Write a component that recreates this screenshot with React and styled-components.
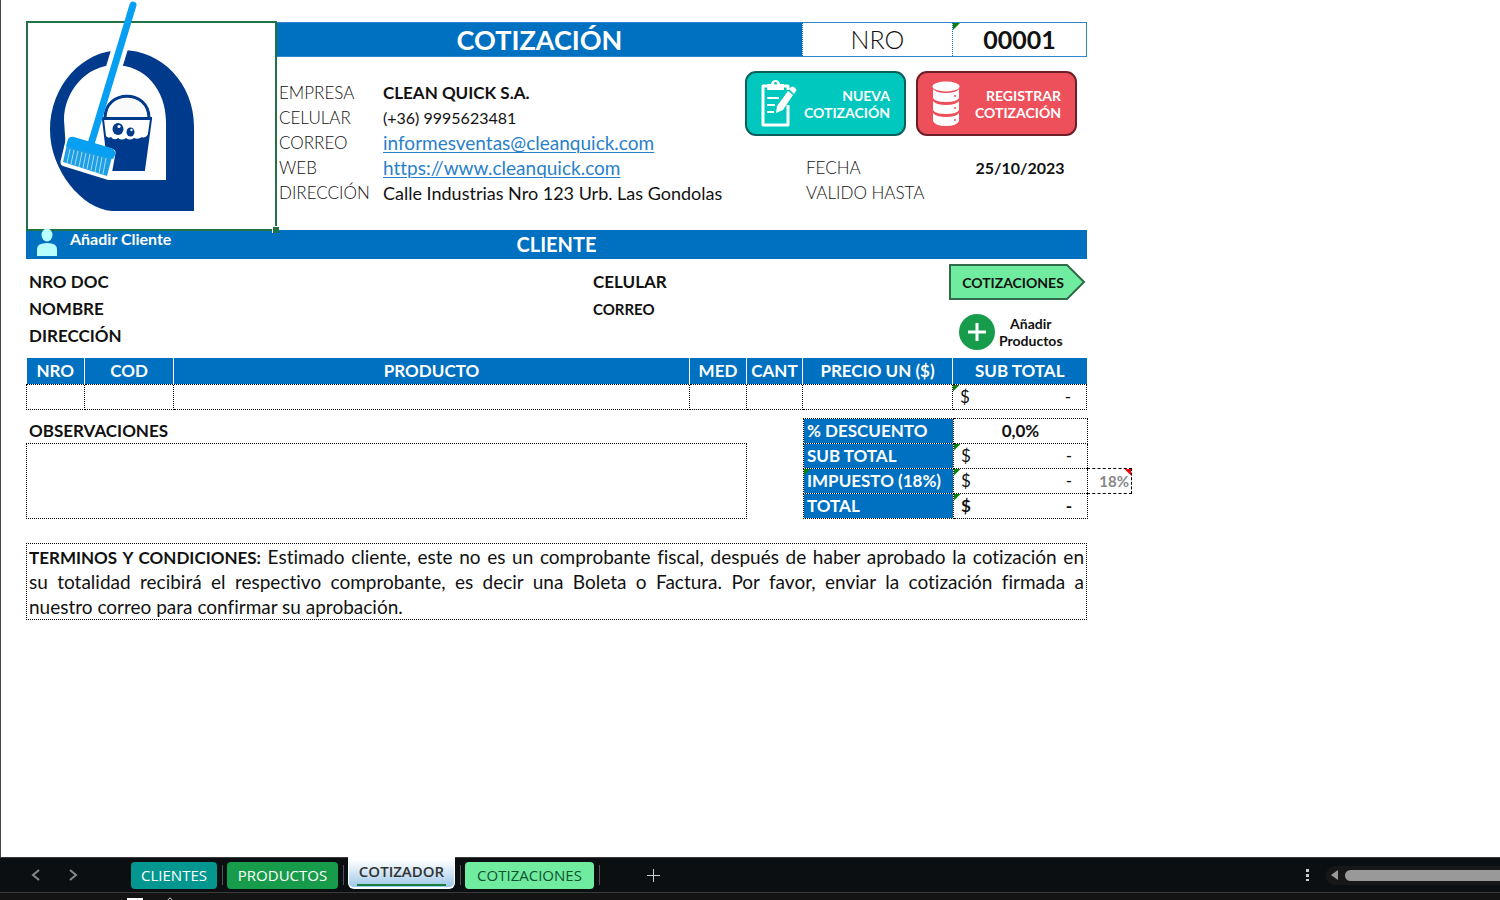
import React from "react";
import styled, { createGlobalStyle } from "styled-components";

const BLUE = "#0070c0";
const DOTTED = "1px dotted #000";

const GlobalStyle = createGlobalStyle`
  * {
    box-sizing: border-box;
  }
  body {
    margin: 0;
    background: #fff;
    color: #111;
    font-family: Lato, "Liberation Sans", sans-serif;
    font-size: 17px;
    font-variant-ligatures: none;
  }
  button, input, textarea {
    font: inherit;
    color: inherit;
    border: none;
    background: none;
    padding: 0;
  }
  button {
    cursor: pointer;
  }
`;

const Page = styled.div`
  min-height: 100vh;
  display: flex;
  flex-direction: column;
`;

const Sheet = styled.main`
  flex: 1;
  border-left: 1px solid #444;
  padding: 21px 24px 24px 25px;
`;

const Quote = styled.div`
  max-width: 1061px;
`;

const Header = styled.header`
  position: relative;
  z-index: 1;
  display: grid;
  grid-template-columns: 251px 1fr;
`;

const LogoCell = styled.div`
  position: relative;
  border: 2px solid #217346;
  height: 210px;

  svg {
    display: block;
    width: 247px;
    height: 206px;
    overflow: visible;
  }
`;

const FillHandle = styled.span`
  position: absolute;
  right: -4px;
  bottom: -4px;
  width: 7px;
  height: 7px;
  background: #217346;
  border: 1px solid #fff;
  border-width: 1px 0 0 1px;
`;

const TitleBar = styled.div`
  display: grid;
  grid-template-columns: 1fr 150px 134px;
  height: 35px;
  margin-top: 1px;
  border: 1px solid #2f86cc;
  border-left: none;
  text-align: center;
  line-height: 33px;
`;

const Title = styled.h1`
  margin: 0;
  background: ${BLUE};
  color: #fff;
  font-size: 27px;
  line-height: 33px;
`;

const NumberCell = styled.div`
  position: relative;
  border-left: 1px dotted ${BLUE};
  font-size: 25px;
  font-weight: ${(props) => (props.$strong ? 700 : 300)};
`;

const Flag = styled.span`
  position: absolute;
  top: 0;
  ${(props) => (props.$red ? "right: 0" : "left: 0")};
  width: 7px;
  height: 7px;
  background: ${(props) => (props.$red ? "#f00" : "#0a800a")};
  clip-path: ${(props) =>
    props.$red
      ? "polygon(0 0, 100% 0, 100% 100%)"
      : "polygon(0 0, 100% 0, 0 100%)"};
`;

const HeaderBody = styled.div`
  display: grid;
  grid-template-columns: 1fr 342px;
`;

const Info = styled.dl`
  display: grid;
  grid-template-columns: ${(props) => props.$labels || "104px"} 1fr;
  grid-auto-rows: 25px;
  align-items: center;
  margin: 0;
  padding: ${(props) => props.$pad || "23px 0 0 2px"};
  white-space: nowrap;

  dt {
    font-weight: 300;
  }
  dd {
    margin: 0;
  }
  a {
    color: #2a7fcb;
    font-size: 19px;
    text-decoration-thickness: 1px;
    text-underline-offset: 2px;
  }
`;

const Phone = styled.dd`
  font-size: 16px;
`;

const Address = styled.dd`
  font-size: 18px;
`;

const DateValue = styled.dd`
  font-size: 16px;
  font-weight: 700;
  text-align: center;
`;

const Actions = styled.div`
  display: flex;
  gap: 10px;
  padding-top: 14px;
`;

const ActionButton = styled.button`
  display: flex;
  align-items: center;
  justify-content: space-between;
  width: 161px;
  height: 65px;
  padding: 0 14px;
  border: 2px solid ${(props) => props.$edge};
  border-radius: 11px;
  background: ${(props) => props.$fill};
  color: #fff;
  font-size: 14px;
  font-weight: 700;
  line-height: 17px;
  text-align: right;
`;

const ClientBand = styled.div`
  display: grid;
  grid-template-columns: 1fr auto 1fr;
  height: 29px;
  margin-top: -1px;
  background: ${BLUE};
  color: #fff;

  h2 {
    margin: 0;
    font-size: 20px;
    line-height: 29px;
  }
`;

const AddClient = styled.button`
  position: relative;
  z-index: 2;
  display: flex;
  justify-self: start;
  gap: 12px;
  padding-left: 10px;
  font-size: 16px;
  font-weight: 700;
  line-height: 18px;
`;

const ClientForm = styled.form`
  display: grid;
  grid-template-columns: 564fr 356fr 138px;
  padding: 5px 0 8px 3px;
`;

const Fields = styled.div`
  display: grid;
  grid-auto-rows: 27px;
  padding-top: 4px;
`;

const Field = styled.label`
  display: flex;
  align-items: center;
  gap: 12px;
  font-weight: 700;
  font-size: ${(props) => (props.$small ? "15px" : "17px")};

  input {
    flex: 1;
    min-width: 0;
  }
`;

const SideButtons = styled.div`
  display: flex;
  flex-direction: column;
  align-items: flex-start;
  gap: 13px;
`;

const ArrowButton = styled.button`
  display: grid;
  width: 138px;
  height: 37px;
  font-size: 14px;
  font-weight: 700;

  svg,
  span {
    grid-area: 1 / 1;
  }
  span {
    align-self: center;
    padding-right: 10px;
  }
`;

const AddProducts = styled.button`
  display: flex;
  align-items: center;
  gap: 4px;
  margin-left: 10px;
  font-size: 14px;
  font-weight: 700;
  line-height: 17px;
`;

const Products = styled.table`
  width: 100%;
  table-layout: fixed;
  border-collapse: collapse;

  th {
    height: 26px;
    padding: 0;
    background: ${BLUE};
    color: #fff;
    white-space: nowrap;
  }
  th + th {
    border-left: 1px solid #fff;
  }
  td {
    height: 25px;
    padding: 0;
    border: ${DOTTED};
  }
`;

const MoneyCell = styled.td`
  position: relative;
  font-weight: ${(props) => (props.$strong ? 700 : 400)};
`;

const Money = styled.span`
  display: flex;
  justify-content: space-between;
  padding: 0 15px 0 7px;
`;

const Bottom = styled.div`
  display: grid;
  grid-template-columns: minmax(0, 1fr) 328px;
  column-gap: 56px;
  margin: 8px -44px 24px 0;
`;

const Notes = styled.label`
  display: flex;
  flex-direction: column;
  font-weight: 700;

  span {
    padding-left: 3px;
    line-height: 25px;
  }
  textarea {
    flex: 1;
    border: ${DOTTED};
    resize: none;
    font-weight: 400;
  }
`;

const Totals = styled.table`
  width: 100%;
  table-layout: fixed;
  border-collapse: collapse;

  th,
  td {
    height: 25px;
    padding: 0;
    border: ${DOTTED};
  }
  th {
    position: relative;
    padding-left: 3px;
    background: ${BLUE};
    color: #fff;
    text-align: left;
    white-space: nowrap;
  }
`;

const Discount = styled.td`
  font-weight: 700;
  text-align: center;
`;

const RateCell = styled.td`
  && {
    position: relative;
    border: 1px dashed #000;
    border-left: none;
    color: #888;
    font-size: 15px;
    font-weight: 700;
    text-align: right;
    padding-right: 2px;
  }
`;

const EmptyCell = styled.td`
  && {
    border: none;
  }
`;

const Terms = styled.p`
  margin: 0;
  padding: 0 2px;
  border: ${DOTTED};
  font-size: 19px;
  line-height: 25px;
  text-align: justify;

  b {
    font-size: 17px;
    line-height: 17px;
  }
`;

const TabBar = styled.nav`
  display: flex;
  align-items: center;
  height: 36px;
  border-top: 1px solid #3a3a3a;
  border-bottom: 1px solid #3a3a3a;
  background: #0b0f12;
  color: #ccc;
  font-family: "Open Sans", "Noto Sans", sans-serif;
  font-size: 15px;
`;

const NavButtons = styled.div`
  display: flex;
  gap: 21px;
  width: 131px;
  padding-left: 28px;
`;

const IconButton = styled.button`
  display: flex;
`;

const Tab = styled.button`
  width: ${(props) => props.$width};
  height: 27px;
  border-radius: 4px;
  background: ${(props) => props.$fill};
  color: ${(props) => props.$ink || "#fff"};
  text-align: center;
`;

const ActiveTab = styled(Tab)`
  align-self: flex-start;
  height: 32px;
  margin: -1px 0 0;
  padding: 0 8px;
  border: 1px solid #fff;
  border-width: 0 1px 2px;
  border-radius: 0 0 6px 6px;
  background: linear-gradient(#fff 10%, #9dc8e8);
  color: #333;
  font-weight: 600;

  span {
    display: block;
    border-bottom: 2px solid #15803d;
    line-height: 25px;
  }
`;

const Divider = styled.span`
  width: 1px;
  height: 20px;
  margin: 0 4px 0 5px;
  background: #555;
`;

const AddSheet = styled(IconButton)`
  margin-left: 42px;
`;

const ScrollArea = styled.div`
  display: flex;
  align-items: center;
  gap: 17px;
  margin-left: auto;
`;

const ScrollTrack = styled.div`
  display: flex;
  align-items: center;
  gap: 6px;
  padding-left: 4px;
  background: #171717;
  border-radius: 9px 0 0 9px;
  height: 19px;
`;

const ScrollThumb = styled.div`
  width: 155px;
  height: 11px;
  border-radius: 6px 0 0 6px;
  background: #999;
`;

const Taskbar = styled.div`
  display: flex;
  align-items: flex-end;
  gap: 24px;
  height: 7px;
  padding-left: 127px;
  background: #141414;
`;

const Logo = () => (
  <svg viewBox="28 23 247 206" role="img" aria-label="Clean Quick">
    <path
      fill="#003a8c"
      fillRule="evenodd"
      d="M122 50C162 50 194 84 194 126V211H112C82 209 50 170 50 130C50 86 82 50 122 50ZM115 65C86 65 64 92 64 120L66 150L108 180H166V122C166 90 145 65 115 65Z"
    />
    <path d="M123 38L106 94" stroke="#fff" strokeWidth="16" />
    <path
      d="M105 118C105 89 149 89 149 118"
      fill="#fafafa"
      stroke="#003a8c"
      strokeWidth="3"
    />
    <path
      d="M103 119H151L144 170H109Z"
      fill="#fff"
      stroke="#003a8c"
      strokeWidth="2"
    />
    <path
      fill="#003a8c"
      d="M102 117H152V120H102ZM105 135Q108 139 111 137Q114 141 118 138Q122 141 126 138Q130 141 134 138Q138 140 142 137Q145 139 149 133L144 171H109Z"
    />
    <ellipse cx="118" cy="129" rx="5.5" ry="6" fill="#003a8c" />
    <ellipse cx="130.500" cy="132" rx="4" ry="4.500" fill="#003a8c" />
    <circle cx="119" cy="126.500" r="1.600" fill="#fff" />
    <circle cx="131.500" cy="130" r="1.200" fill="#fff" />
    <path
      d="M70 141L111 153L107 175L65 162Z"
      fill="#fff"
      stroke="#fff"
      strokeWidth="9"
      strokeLinejoin="round"
    />
    <path
      d="M133 5L91 144"
      stroke="#069ff2"
      strokeWidth="7"
      strokeLinecap="round"
    />
    <path d="M67 144L112 157L107 176L63 162Z" fill="#1d9fe5" />
    <path
      d="M70 149L67 163M74 150L71 164M78 151L75 165M82 152L79 167M86 153L83 168M90 154L87 169M94 155L91 170M98 156L95 172M102 157L99 173M106 158L103 174"
      stroke="#a7dcf8"
      strokeWidth="1"
    />
    <path
      d="M66 146L68 139Q70 136 74 137L111 148Q116 150 115 155L113 159Z"
      fill="#069ff2"
    />
  </svg>
);

const ClipboardIcon = () => (
  <svg width="36" height="48" viewBox="0 0 36 48" aria-hidden="true">
    <path
      d="M27 25V45H2V6H27V10"
      fill="none"
      stroke="#fff"
      strokeWidth="3"
      strokeLinejoin="round"
    />
    <path
      fill="#fff"
      fillRule="evenodd"
      d="M6 10V4H10Q11 0 14.500 0Q18 0 19 4H23V10ZM14.500 2A1.500 1.500 0 1 0 14.600 2Z"
    />
    <path d="M6 18H18M6 25H14M6 32H13" stroke="#fff" strokeWidth="2" />
    <path
      fill="#fff"
      d="M27 11L32 15L22 30L15 33L16 26ZM28 9L30 7Q31 6 33 7L35 9Q36 10 35 11L33 14Z"
    />
  </svg>
);

const DatabaseIcon = () => (
  <svg width="28" height="46" viewBox="0 0 28 46" aria-hidden="true">
    <ellipse cx="14" cy="5.500" rx="13.500" ry="5" fill="#fff" />
    <g fill="#fff">
      <path d="M1 8Q4 12 14 12Q24 12 27 8V17Q25 21 14 21Q3 21 1 17Z" />
      <path d="M1 20Q4 24 14 24Q24 24 27 20V29Q25 33 14 33Q3 33 1 29Z" />
      <path d="M1 32Q4 36 14 36Q24 36 27 32V40Q25 45 14 45Q3 45 1 40Z" />
    </g>
    <g fill="#ee505b">
      <circle cx="23" cy="15" r="1" />
      <circle cx="23" cy="27" r="1" />
      <circle cx="23" cy="39" r="1" />
    </g>
  </svg>
);

const PersonIcon = () => (
  <svg width="22" height="28" viewBox="0 0 22 28" overflow="visible" aria-hidden="true">
    <ellipse cx="11" cy="5" rx="5.500" ry="6.500" fill="#b9ffff" />
    <path d="M1 26V19Q1 13 11 13Q21 13 21 19V26Z" fill="#b9ffff" />
  </svg>
);

const columns = [
  { name: "NRO", width: "58px" },
  { name: "COD", width: "89px" },
  { name: "PRODUCTO", width: "auto" },
  { name: "MED", width: "57px" },
  { name: "CANT", width: "56px" },
  { name: "PRECIO UN ($)", width: "150px" },
  { name: "SUB TOTAL", width: "134px" },
];

const Amount = ({ strong }) => (
  <MoneyCell $strong={strong}>
    <Flag />
    <Money>
      <span>$</span>
      <span>-</span>
    </Money>
  </MoneyCell>
);

const App = () => {
  return (
    <Page>
      <GlobalStyle />
      <Sheet>
        <Quote>
          <Header>
            <LogoCell>
              <Logo />
              <FillHandle />
            </LogoCell>
            <div>
              <TitleBar>
                <Title>COTIZACIÓN</Title>
                <NumberCell>NRO</NumberCell>
                <NumberCell $strong>
                  <Flag />
                  00001
                </NumberCell>
              </TitleBar>
              <HeaderBody>
                <Info>
                  <dt>EMPRESA</dt>
                  <dd>
                    <b>CLEAN QUICK S.A.</b>
                  </dd>
                  <dt>CELULAR</dt>
                  <Phone>(+36) 9995623481</Phone>
                  <dt>CORREO</dt>
                  <dd>
                    <a href="mailto:informesventas@cleanquick.com">
                      informesventas@cleanquick.com
                    </a>
                  </dd>
                  <dt>WEB</dt>
                  <dd>
                    <a href="https://www.cleanquick.com">
                      https://www.cleanquick.com
                    </a>
                  </dd>
                  <dt>DIRECCIÓN</dt>
                  <Address>Calle Industrias Nro 123 Urb. Las Gondolas</Address>
                </Info>
                <div>
                  <Actions>
                    <ActionButton $fill="#00c8be" $edge="#0b5f5b">
                      <ClipboardIcon />
                      <span>
                        NUEVA
                        <br />
                        COTIZACIÓN
                      </span>
                    </ActionButton>
                    <ActionButton $fill="#ee505b" $edge="#6e1f26">
                      <DatabaseIcon />
                      <span>
                        REGISTRAR
                        <br />
                        COTIZACIÓN
                      </span>
                    </ActionButton>
                  </Actions>
                  <Info $labels="147px" $pad="19px 0 0 61px">
                    <dt>FECHA</dt>
                    <DateValue>25/10/2023</DateValue>
                    <dt>VALIDO HASTA</dt>
                    <dd />
                  </Info>
                </div>
              </HeaderBody>
            </div>
          </Header>

          <ClientBand>
            <AddClient>
              <PersonIcon />
              Añadir Cliente
            </AddClient>
            <h2>CLIENTE</h2>
          </ClientBand>

          <ClientForm>
            <Fields>
              <Field>
                NRO DOC <input name="doc" />
              </Field>
              <Field>
                NOMBRE <input name="nombre" />
              </Field>
              <Field>
                DIRECCIÓN <input name="direccion" />
              </Field>
            </Fields>
            <Fields>
              <Field>
                CELULAR <input name="celular" />
              </Field>
              <Field $small>
                CORREO <input name="correo" />
              </Field>
            </Fields>
            <SideButtons>
              <ArrowButton type="button">
                <svg width="138" height="37" aria-hidden="true">
                  <path
                    d="M1 1H118L135 18L118 35H1Z"
                    fill="#70eca0"
                    stroke="#2f6b48"
                    strokeWidth="2"
                  />
                </svg>
                <span>COTIZACIONES</span>
              </ArrowButton>
              <AddProducts type="button">
                <svg width="36" height="36" aria-hidden="true">
                  <circle cx="18" cy="18" r="18" fill="#179c4b" />
                  <path d="M18 9V27M9 18H27" stroke="#fff" strokeWidth="3" />
                </svg>
                <span>
                  Añadir
                  <br />
                  Productos
                </span>
              </AddProducts>
            </SideButtons>
          </ClientForm>

          <Products>
            <colgroup>
              {columns.map((col) => (
                <col key={col.name} width={col.width} />
              ))}
            </colgroup>
            <thead>
              <tr>
                {columns.map((col) => (
                  <th key={col.name}>{col.name}</th>
                ))}
              </tr>
            </thead>
            <tbody>
              <tr>
                <td />
                <td />
                <td />
                <td />
                <td />
                <td />
                <Amount />
              </tr>
            </tbody>
          </Products>

          <Bottom>
            <Notes>
              <span>OBSERVACIONES</span>
              <textarea name="observaciones" />
            </Notes>
            <Totals>
              <colgroup>
                <col width="150" />
                <col width="134" />
                <col width="44" />
              </colgroup>
              <tbody>
                <tr>
                  <th scope="row">% DESCUENTO</th>
                  <Discount>0,0%</Discount>
                  <EmptyCell />
                </tr>
                <tr>
                  <th scope="row">SUB TOTAL</th>
                  <Amount />
                  <EmptyCell />
                </tr>
                <tr>
                  <th scope="row">
                    <Flag />
                    IMPUESTO (18%)
                  </th>
                  <Amount />
                  <RateCell>
                    <Flag $red />
                    18%
                  </RateCell>
                </tr>
                <tr>
                  <th scope="row">TOTAL</th>
                  <Amount strong />
                  <EmptyCell />
                </tr>
              </tbody>
            </Totals>
          </Bottom>

          <Terms>
            <b>TERMINOS Y CONDICIONES:</b> Estimado cliente, este no es un
            comprobante fiscal, después de haber aprobado la cotización en
            su&nbsp;totalidad recibirá el respectivo comprobante, es decir una
            Boleta o Factura. Por favor, enviar la cotización firmada a
            nuestro&nbsp;correo para confirmar su aprobación.
          </Terms>
        </Quote>
      </Sheet>

      <TabBar>
        <NavButtons>
          <IconButton aria-label="Anterior">
            <svg width="16" height="16" fill="none" stroke="#888" strokeWidth="2">
              <path d="M11 3L5 8L11 13" />
            </svg>
          </IconButton>
          <IconButton aria-label="Siguiente">
            <svg width="16" height="16" fill="none" stroke="#888" strokeWidth="2">
              <path d="M5 3L11 8L5 13" />
            </svg>
          </IconButton>
        </NavButtons>
        <Tab $width="86px" $fill="#04978f">
          CLIENTES
        </Tab>
        <Divider />
        <Tab $width="111px" $fill="#179c4b">
          PRODUCTOS
        </Tab>
        <Divider />
        <ActiveTab $width="107px">
          <span>COTIZADOR</span>
        </ActiveTab>
        <Divider />
        <Tab $width="129px" $fill="#70eca0" $ink="#14532d">
          COTIZACIONES
        </Tab>
        <Divider />
        <AddSheet aria-label="Nueva hoja">
          <svg width="14" height="14" stroke="#ccc" strokeWidth="1">
            <path d="M7.500 1V14M1 7.500H14" />
          </svg>
        </AddSheet>
        <ScrollArea>
          <svg width="3" height="12" fill="#ccc" aria-hidden="true">
            <path d="M0 0H3V3H0ZM0 5H3V8H0ZM0 10H3V12H0Z" />
          </svg>
          <ScrollTrack>
            <svg width="9" height="12" fill="#999" aria-hidden="true">
              <path d="M8 1V11L1 6Z" />
            </svg>
            <ScrollThumb />
          </ScrollTrack>
        </ScrollArea>
      </TabBar>
      <Taskbar>
        <svg width="16" height="2" fill="#fff" aria-hidden="true">
          <path d="M0 0H16V2H0Z" />
        </svg>
        <svg width="6" height="3" fill="none" stroke="#ccc" aria-hidden="true">
          <path d="M1 3Q3 -1 5 3" />
        </svg>
      </Taskbar>
    </Page>
  );
};

export default App;
